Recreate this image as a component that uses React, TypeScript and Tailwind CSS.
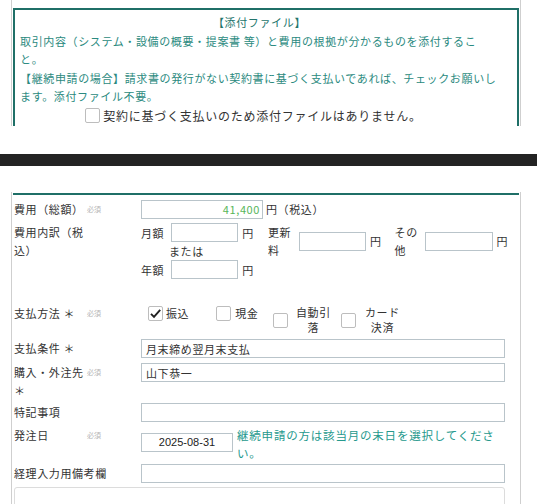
import React from 'react';

const font = "font-['Noto_Sans_CJK_JP','Noto_Sans',sans-serif]";
const txt = 'text-[11px] tracking-[0.6px] text-[#333] leading-[18px]';
const inputCls = 'border border-[#b9c4ca] bg-white h-[19px]';

function Check({ checked = false }: { checked?: boolean }) {
  return (
    <span className="inline-flex w-[15px] h-[15px] shrink-0 items-center justify-center border border-[#bdbdbd] rounded-[2px] bg-white">
      {checked && (
        <svg width="13" height="13" viewBox="0 0 13 13">
          <path d="M2 6.8 L5 9.8 L11.2 2.8" fill="none" stroke="#222" strokeWidth="1.9" />
        </svg>
      )}
    </span>
  );
}

function Label({ text, req, narrow }: { text: string; req?: boolean; narrow?: boolean }) {
  return (
    <div className="flex w-[127px] shrink-0">
      <div className={`${narrow || req ? 'w-[73px]' : 'w-[127px]'} ${txt}`}>{text}</div>
      {req && <span className="text-[7px] text-[#b5b5b5] leading-[18px]">必須</span>}
    </div>
  );
}

export default function App() {
  return (
    <div className={`w-[537px] h-[504px] bg-white overflow-hidden ${font}`}>
      {/* attachment notice */}
      <div className="ml-[11px] w-[510px] h-[126px] border-x border-[#cfcfcf] pt-[8px] overflow-hidden">
        <div className="ml-[1px] w-[506px] h-[140px] border-2 border-[#1f6f67] pl-[5px] pr-[18px] pt-[3px] text-[11px] tracking-[0.63px] leading-[18.5px] text-[#2b8a80]">
          <div className="text-center text-[#23756c]">【添付ファイル】</div>
          <div>取引内容（システム・設備の概要・提案書 等）と費用の根拠が分かるものを添付すること。</div>
          <div>【継続申請の場合】請求書の発行がない契約書に基づく支払いであれば、チェックお願いします。添付ファイル不要。</div>
          <div className="flex items-center justify-center gap-[3px] text-[#333] mt-[1px] pr-[12px] text-[12px] tracking-[0.75px]">
            <Check />
            <span>契約に基づく支払いのため添付ファイルはありません。</span>
          </div>
        </div>
      </div>

      <div className="h-[28px]" />
      <div className="h-[12px] bg-[#232323]" />
      <div className="h-[26px]" />

      {/* form */}
      <div className="ml-[11px] w-[510px] h-[320px] border-x border-[#cfcfcf] pt-[1px]">
        <div className="ml-[1px] w-[506px] h-[2px] bg-[#1f6f67]" />

        <div className="pl-[2px] flex flex-col">
          {/* 費用（総額） */}
          <div className="flex items-start mt-[5px]">
            <Label text="費用（総額）" req />
            <div className={`${inputCls} w-[122px] text-right pr-[2px] text-[11px] tracking-[0.6px] leading-[17px] text-[#57b65a]`}>41,400</div>
            <span className={`${txt} ml-[3px]`}>円（税込）</span>
          </div>

          {/* 費用内訳 */}
          <div className="flex items-start mt-[4px]">
            <Label text="費用内訳（税込）" narrow />
            <div className="flex flex-col w-[127px]">
              <div className="flex items-center">
                <span className={txt}>月額</span>
                <div className={`${inputCls} w-[67px] ml-[7px]`} />
                <span className={`${txt} ml-[4px]`}>円</span>
              </div>
              <div className={`${txt} pl-[28px]`}>または</div>
              <div className="flex items-center">
                <span className={txt}>年額</span>
                <div className={`${inputCls} w-[67px] ml-[7px]`} />
                <span className={`${txt} ml-[4px]`}>円</span>
              </div>
            </div>
            <div className="flex items-center">
              <span className={`${txt} w-[25px]`}>更新料</span>
              <div className={`${inputCls} w-[67px] ml-[6px]`} />
              <span className={`${txt} ml-[4px]`}>円</span>
            </div>
            <div className="flex items-center ml-[13px]">
              <span className={`${txt} w-[25px]`}>その他</span>
              <div className={`${inputCls} w-[68px] ml-[5px]`} />
              <span className={`${txt} ml-[4px]`}>円</span>
            </div>
          </div>

          {/* 支払方法 */}
          <div className="flex items-start mt-[25px]">
            <Label text="支払方法 ＊" req />
            <div className="flex items-start ml-[7px]">
              <div className="flex items-center h-[18px]">
                <Check checked />
                <span className={`${txt} ml-[3px]`}>振込</span>
              </div>
              <div className="flex items-center h-[18px] ml-[27px]">
                <Check />
                <span className={`${txt} ml-[4px]`}>現金</span>
              </div>
              <div className="flex items-center ml-[15px] mt-[1px]">
                <Check />
                <span className="text-[11px] tracking-[0.6px] text-[#333] leading-[15px] w-[36px] text-center ml-[7px]">自動引落</span>
              </div>
              <div className="flex items-center ml-[10px] mt-[1px]">
                <Check />
                <span className="text-[11px] tracking-[0.6px] text-[#333] leading-[15px] w-[36px] text-center ml-[8px]">カード決済</span>
              </div>
            </div>
          </div>

          {/* 支払条件 */}
          <div className="flex items-start mt-[4px]">
            <Label text="支払条件 ＊" />
            <div className={`${inputCls} w-[364px] pl-[4px] ${txt} leading-[17px] text-[#222]`}>月末締め翌月末支払</div>
          </div>

          {/* 購入・外注先 */}
          <div className="flex items-start mt-[5px]">
            <Label text="購入・外注先 ＊" req />
            <div className={`${inputCls} w-[364px] pl-[4px] ${txt} leading-[17px] text-[#222]`}>山下恭一</div>
          </div>

          {/* 特記事項 */}
          <div className="flex items-start mt-[4px]">
            <Label text="特記事項" />
            <div className={`${inputCls} w-[364px]`} />
          </div>

          {/* 発注日 */}
          <div className="flex items-start mt-[4px]">
            <Label text="発注日" req />
            <div className={`${inputCls} w-[92px] mt-[7px] text-center text-[11px] leading-[17px] text-[#222] font-['Liberation_Sans',sans-serif]`}>2025-08-31</div>
            <div className="w-[266px] ml-[4px] text-[11.5px] tracking-[0.8px] leading-[18px] text-[#26998d]">継続申請の方は該当月の末日を選択してください。</div>
          </div>

          {/* 経理入力用備考欄 */}
          <div className="flex items-start mt-[2px]">
            <Label text="経理入力用備考欄" />
            <div className={`${inputCls} w-[364px]`} />
          </div>

          {/* 決裁履歴 */}
          <div className="mt-[4px] w-[491px] h-[40px] border border-[#dcdcdc] rounded-[3px] pl-[12px] pt-[7px]">
            <span className="text-[10px] tracking-[0.5px] text-[#333]">決裁履歴</span>
          </div>
        </div>
      </div>
    </div>
  );
}
